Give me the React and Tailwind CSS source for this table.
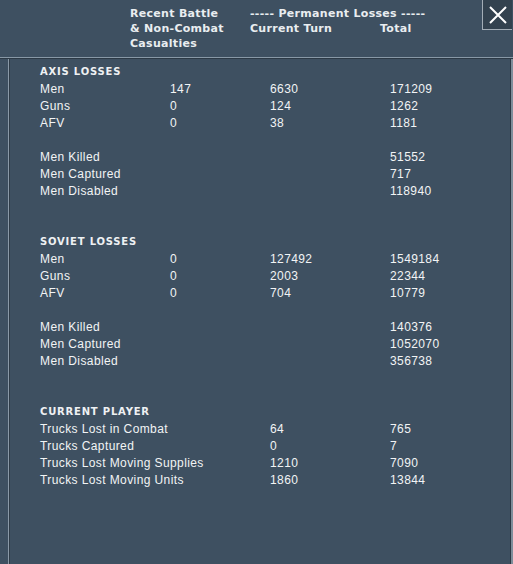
const axis = [
  ["Men", "147", "6630", "171209"],
  ["Guns", "0", "124", "1262"],
  ["AFV", "0", "38", "1181"],
  null,
  ["Men Killed", "", "", "51552"],
  ["Men Captured", "", "", "717"],
  ["Men Disabled", "", "", "118940"],
];

const soviet = [
  ["Men", "0", "127492", "1549184"],
  ["Guns", "0", "2003", "22344"],
  ["AFV", "0", "704", "10779"],
  null,
  ["Men Killed", "", "", "140376"],
  ["Men Captured", "", "", "1052070"],
  ["Men Disabled", "", "", "356738"],
];

const trucks = [
  ["Trucks Lost in Combat", "", "64", "765"],
  ["Trucks Captured", "", "0", "7"],
  ["Trucks Lost Moving Supplies", "", "1210", "7090"],
  ["Trucks Lost Moving Units", "", "1860", "13844"],
];

const Section = ({ title, rows, className }) => {
  return (
    <div className={className}>
      <h3 className="h-[18px] leading-[18px] font-['DejaVu_Sans',sans-serif] font-bold text-[10px] tracking-[0.8px] text-[#eef1f3]">
        {title}
      </h3>
      {rows.map((r, i) =>
        r ? (
          <div key={i} className="grid grid-cols-[130px_100px_120px_1fr] h-[17px] leading-[17px]">
            <span className="whitespace-nowrap">{r[0]}</span>
            <span>{r[1]}</span>
            <span>{r[2]}</span>
            <span>{r[3]}</span>
          </div>
        ) : (
          <div key={i} className="h-[17px]" />
        )
      )}
    </div>
  );
};

export default function App() {
  return (
    <div className="relative w-[513px] h-[564px] overflow-hidden bg-[#3e5061] text-[#f2f4f5] flex flex-col">
      {/* column headings */}
      <div className="h-[57px] pt-[6px] pl-[130px] font-['DejaVu_Sans',sans-serif] font-bold text-[11px] tracking-[0.3px] leading-[15px] text-[#e9edf0] flex">
        <div className="w-[120px]">
          <p>Recent Battle</p>
          <p>&amp; Non-Combat</p>
          <p>Casualties</p>
        </div>
        <div>
          <p className="whitespace-pre">----- Permanent Losses -----</p>
          <div className="flex">
            <span className="w-[130px]">Current Turn</span>
            <span>Total</span>
          </div>
        </div>
      </div>

      <button className="absolute top-0 right-[1px] w-[30px] h-[30px] flex items-center justify-center bg-[#33424f] border-l border-b border-[#a3adb6] text-white">
        <svg width="20" height="20" viewBox="0 0 20 20" stroke="currentColor" strokeWidth="2">
          <path d="M2 2 L18 18 M18 2 L2 18" />
        </svg>
      </button>

      <div className="border-t border-[#8898a6] border-b border-b-[#2c3945]" />

      <div className="flex-1 flex">
        <div className="w-[9px] border-r border-[#8a99a7]" />
        <div className="w-px bg-[#2f3c48]" />
        <div className="flex-1 pt-[4px] pl-[30px] font-['Liberation_Sans',Arial,sans-serif] text-[12px] tracking-[0.4px]">
          <Section title="AXIS LOSSES" rows={axis} />
          <Section title="SOVIET LOSSES" rows={soviet} className="mt-[33px]" />
          <Section title="CURRENT PLAYER" rows={trucks} className="mt-[33px]" />
        </div>
        <div className="w-px bg-[#2c3945]" />
        <div className="w-[2px] bg-[#7f8e9b]" />
      </div>
    </div>
  );
}
